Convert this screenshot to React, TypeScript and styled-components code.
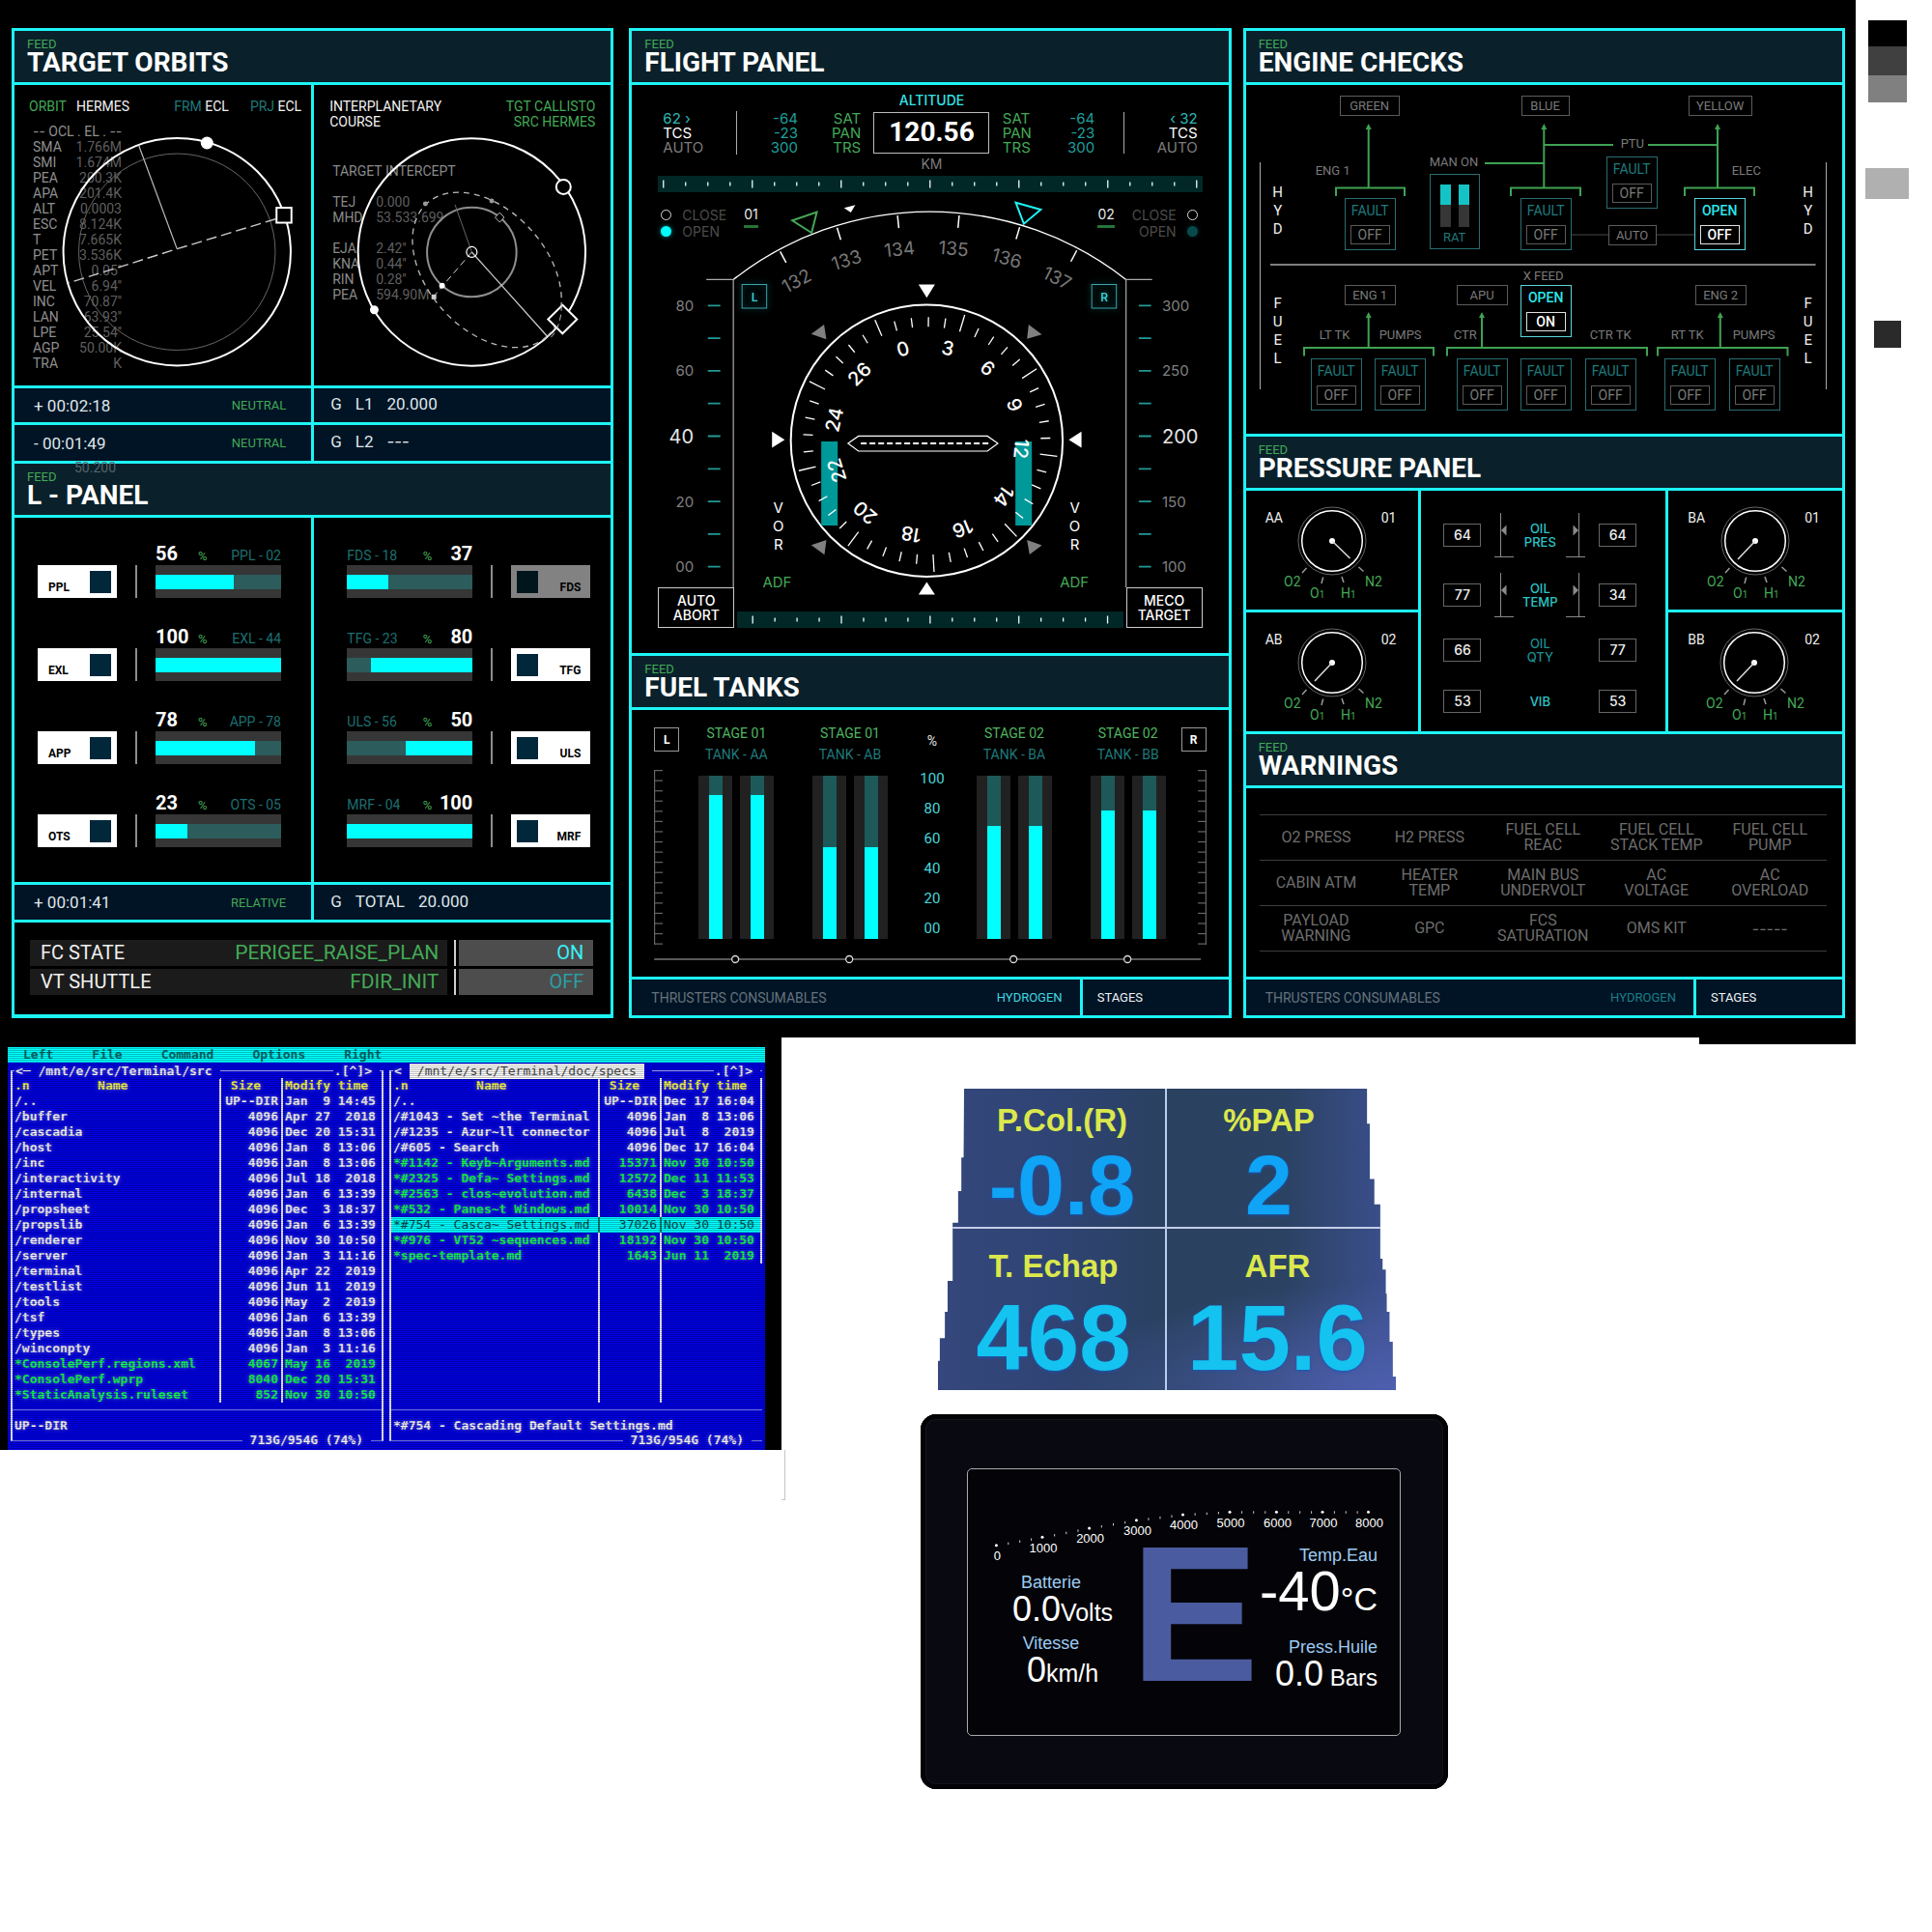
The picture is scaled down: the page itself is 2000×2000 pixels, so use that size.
import React from "react";
import styled, { createGlobalStyle, css } from "styled-components";

const C = {
  cyan: "#1df4f6",
  fill: "#00ffff",
  green: "#43a957",
  teal: "#1f7a7b",
  header: "#0a212b",
  navy: "#011425",
  grey: "#7c7c7c",
};
const NARROW = 'Roboto, "Liberation Sans", sans-serif';
const WIDE = 'Inter, "Liberation Sans", sans-serif';

const Global = createGlobalStyle`
  * { box-sizing: border-box; }
  body { margin: 0; background: #fff; font-family: ${NARROW}; }
  button { font: inherit; color: inherit; background: none; border: 0; padding: 0; margin: 0; cursor: pointer; }
  ul, dl, dd, dt, h2, p { margin: 0; padding: 0; list-style: none; }
`;

/* ---------- page frame ---------- */
const Page = styled.div`
  display: flex;
  align-items: flex-start;
`;
const Main = styled.main`
  flex: 1;
  min-width: 0;
`;
const Console = styled.section`
  background: #000;
  padding: 29px 11px 20px 12px;
  display: grid;
  grid-template-columns: minmax(0, 1fr) 16px minmax(0, 1fr) 12px minmax(0, 1fr);
  > :nth-child(2) {
    grid-column: 3;
  }
  > :nth-child(3) {
    grid-column: 5;
  }
`;
const Panel = styled.section`
  display: flex;
  flex-direction: column;
  gap: 3px;
  padding: 3px;
  background: ${C.cyan};
`;
const Head = styled.header`
  position: relative;
  background: ${C.header};
  padding: 7px 13px;
`;
const Feed = styled.p`
  font-size: 13px;
  line-height: 13px;
  color: ${C.green};
`;
const Title = styled.h2`
  font-size: 28px;
  line-height: 26px;
  font-weight: 700;
  color: #fff;
`;
const Ghost = styled.span`
  position: absolute;
  left: 62px;
  top: -4px;
  font-size: 14px;
  line-height: 16px;
  color: #56636a;
`;
const Split = styled.div<{ $cols?: string }>`
  display: grid;
  grid-template-columns: ${(p) => p.$cols ?? "1fr 1fr"};
  gap: 3px;
`;
const Pane = styled.div`
  position: relative;
  background: #000;
`;

function Heading({ title, ghost }: { title: string; ghost?: string }) {
  return (
    <Head>
      {ghost && <Ghost>{ghost}</Ghost>}
      <Feed>FEED</Feed>
      <Title>{title}</Title>
    </Head>
  );
}

/* ---------- target orbits ---------- */
const OrbitPane = styled(Pane)<{ $pad: string }>`
  padding: ${(p) => p.$pad};
  font-size: 14px;
  line-height: 16px;
  min-height: 311px;
`;
const OrbitTop = styled.div`
  display: flex;
  gap: 22px;
  color: #f2f2f2;
`;
const Push = styled.span`
  margin-right: auto;
  display: flex;
  gap: 10px;
`;
const Tint = styled.span<{ $c: string }>`
  color: ${(p) => p.$c};
`;
const Dashes = styled.span`
  font-family: ${WIDE};
`;
const Elements = styled.dl`
  margin: 10px 0 0 4px;
  width: 92px;
  color: #8f8f8f;
  div {
    display: flex;
    justify-content: space-between;
    white-space: nowrap;
  }
  dd {
    color: #5f5f5f;
  }
`;
const Intercept = styled.dl<{ $first?: boolean }>`
  margin: ${(p) => (p.$first ? 35 : 16)}px 0 0 3px;
  color: #8a8a8a;
  div {
    display: flex;
  }
  div dt {
    width: 45px;
  }
  dd {
    color: #5f5f5f;
  }
`;
const Right = styled.p`
  text-align: right;
  color: ${C.green};
`;
const Overlay = styled.svg`
  position: absolute;
  inset: 0;
  width: 100%;
  height: 100%;
  pointer-events: none;
`;

const ELEMENTS = [
  ["SMA", "1.766M"], ["SMI", "1.674M"], ["PEA", "200.3K"], ["APA", "201.4K"], ["ALT", "0.0003"],
  ["ESC", "8.124K"], ["T", "7.665K"], ["PET", "3.536K"], ["APT", "0.05''"], ["VEL", "6.94''"],
  ["INC", "70.87''"], ["LAN", "63.93''"], ["LPE", "25.54''"], ["AGP", "50.00K"], ["TRA", "K"],
];

function Orbits() {
  return (
    <Split>
      <OrbitPane $pad="14px 10px 15px 15px">
        <OrbitTop>
          <Push><Tint $c={C.green}>ORBIT</Tint><span>HERMES</span></Push>
          <span><Tint $c={C.teal}>FRM</Tint> ECL</span>
          <span><Tint $c={C.teal}>PRJ</Tint> ECL</span>
        </OrbitTop>
        <Elements>
          <div><dt><Dashes>--</Dashes> OCL . EL . <Dashes>--</Dashes></dt></div>
          {ELEMENTS.map(([k, v]) => (
            <div key={k}><dt>{k}</dt><dd>{v}</dd></div>
          ))}
        </Elements>
        <Overlay viewBox="15 88 308 311" fill="none" stroke="#fff">
          <circle cx="183.7" cy="260.8" r="118" strokeWidth="2" />
          <circle cx="183.7" cy="260.8" r="102" stroke="#666" strokeWidth="1" />
          <path d="M183.7 257.7L143.9 150" stroke="#bbb" strokeWidth="1.2" />
          <path d="M286 226.7L183.7 257.7L70.5 293.3" stroke="#ccc" strokeWidth="1.4" strokeDasharray="11 5" />
          <circle cx="214.8" cy="147.7" r="6.5" fill="#fff" stroke="none" />
          <rect x="287" y="215" width="15.5" height="15.5" fill="#000" strokeWidth="2" />
        </Overlay>
      </OrbitPane>
      <OrbitPane $pad="14px 16px 15px">
        <OrbitTop>
          <Push>INTERPLANETARY<br />COURSE</Push>
          <Right>TGT CALLISTO<br />SRC HERMES</Right>
        </OrbitTop>
        <Intercept $first><dt>TARGET INTERCEPT</dt></Intercept>
        <Intercept>
          <div><dt>TEJ</dt><dd>0.000</dd></div>
          <div><dt>MHD</dt><dd>53.533.699</dd></div>
        </Intercept>
        <Intercept>
          <div><dt>EJA</dt><dd>2.42''</dd></div>
          <div><dt>KNA</dt><dd>0.44''</dd></div>
          <div><dt>RIN</dt><dd>0.28''</dd></div>
          <div><dt>PEA</dt><dd>594.90M</dd></div>
        </Intercept>
        <Overlay viewBox="325 88 308 311" fill="none" stroke="#fff">
          <circle cx="488.8" cy="261" r="118" strokeWidth="2" />
          <circle cx="488.8" cy="261" r="46.4" stroke="#8f8f8f" strokeWidth="2" />
          <ellipse cx="504.6" cy="279.5" rx="93" ry="61.8" transform="rotate(48 504.6 279.5)" stroke="#bbb" strokeWidth="1.3" strokeDasharray="6 5" />
          <path d="M488.8 261L471.4 211.7" stroke="#666" />
          <path d="M488.8 261L449 307.3" stroke="#ccc" strokeDasharray="7 4" />
          <path d="M488.8 261L567 348.3" stroke="#ccc" strokeWidth="1.3" />
          <circle cx="488.8" cy="261" r="5.5" strokeWidth="1.2" />
          <circle cx="440.7" cy="211" r="2.5" fill="#999" stroke="none" />
          <circle cx="509.5" cy="208" r="2.5" fill="#999" stroke="none" />
          <path d="M517.8 220L522.5 225L517.8 230L513 225Z" fill="#000" stroke="#bbb" />
          <circle cx="458" cy="296" r="3" fill="#fff" stroke="none" />
          <rect x="447" y="305" width="5" height="5" fill="#ccc" stroke="none" />
          <path d="M583 316L598 330.7L583 345.5L568 330.7Z" fill="#000" strokeWidth="2" />
          <path d="M582 316C582 330 578 345 568 352" stroke="#bbb" strokeDasharray="6 4" />
          <circle cx="584" cy="193.3" r="7.5" fill="#000" strokeWidth="2" />
          <circle cx="387.6" cy="321" r="4.5" fill="#fff" stroke="none" />
        </Overlay>
      </OrbitPane>
    </Split>
  );
}

/* ---------- status strips ---------- */
const Strip = styled.div<{ $h: number }>`
  display: flex;
  align-items: center;
  justify-content: space-between;
  min-height: ${(p) => p.$h}px;
  padding: 0 26px 0 20px;
  background: ${C.navy};
  color: #dfe5ea;
  font-size: 17px;
`;
const StripInfo = styled(Strip)`
  justify-content: flex-start;
  gap: 14px;
  padding: 0 17px 3px;
`;
const Mode = styled.span<{ $c: string }>`
  font-size: 13px;
  color: ${(p) => p.$c};
`;
function StatusPair({ h, time, mode, info }: { h: number; time: string; mode: string; info: string[] }) {
  return (
    <Split>
      <Strip $h={h}><span>{time}</span><Mode $c={C.green}>{mode}</Mode></Strip>
      <StripInfo $h={h}>{info.map((t) => (t[0] === "-" ? <Dashes key={t}>{t}</Dashes> : <span key={t}>{t}</span>))}</StripInfo>
    </Split>
  );
}
const FootNote = styled(Strip)`
  font-size: 14px;
  color: #66727c;
  padding: 0 18px 0 20px;
`;
const FootTab = styled.button`
  background: ${C.navy};
  color: #eef2f5;
  font-size: 13px;
  text-align: left;
  padding: 0 15px;
`;
function PanelFoot({ bright }: { bright?: boolean }) {
  return (
    <Split $cols="1fr 151px">
      <FootNote $h={37}>
        <span>THRUSTERS CONSUMABLES</span>
        <Mode $c={bright ? "#3fd8e0" : "#1a7f85"}>HYDROGEN</Mode>
      </FootNote>
      <FootTab>STAGES</FootTab>
    </Split>
  );
}

/* ---------- L panel ---------- */
const Channels = styled.ul`
  background: #000;
  display: flex;
  flex-direction: column;
  gap: 28px;
  padding: 25px 21px 36px 24px;
`;
const Channel = styled.li<{ $flip?: boolean }>`
  display: flex;
  flex-direction: ${(p) => (p.$flip ? "row-reverse" : "row")};
  align-items: flex-end;
  gap: 19px;
`;
const Switch = styled.button<{ $flip?: boolean; $off?: boolean }>`
  display: flex;
  flex-direction: ${(p) => (p.$flip ? "row-reverse" : "row")};
  justify-content: space-between;
  align-items: center;
  width: 82px;
  height: 34px;
  padding: 0 6px 0 11px;
  ${(p) => p.$flip && "padding: 0 10px 0 6px;"}
  background: ${(p) => (p.$off ? "#828282" : "#fff")};
  color: #000;
  font-size: 12px;
  font-weight: 700;
`;
const SwitchText = styled.span`
  padding-top: 12px;
`;
const Knob = styled.span<{ $off?: boolean }>`
  width: 22px;
  height: 23px;
  background: ${(p) => (p.$off ? "#00151c" : "#00283a")};
`;
const Rule = styled.span`
  width: 2px;
  height: 34px;
  background: #8d8d8d;
`;
const Level = styled.div`
  width: 130px;
`;
const LevelHead = styled.div<{ $flip?: boolean }>`
  display: grid;
  grid-template-columns: ${(p) => (p.$flip ? "1fr auto 42px" : "44px auto 1fr")};
  align-items: baseline;
  height: 24px;
  line-height: 24px;
  font-size: 13px;
  color: #1c6f70;
`;
const Big = styled.b<{ $end?: boolean }>`
  font-size: 20px;
  color: #fff;
  text-align: ${(p) => (p.$end ? "right" : "left")};
`;
const Name = styled.span<{ $end?: boolean }>`
  font-size: 14px;
  text-align: ${(p) => (p.$end ? "right" : "left")};
`;
const Track = styled.div<{ $end?: boolean }>`
  height: 34px;
  padding: 10px 0 9px;
  background: #363636;
  > div {
    height: 15px;
    background: #2c5c5c;
    display: flex;
    justify-content: ${(p) => (p.$end ? "flex-end" : "flex-start")};
  }
  > div > i {
    background: ${C.fill};
  }
`;
type Ch = { id: string; value: number; name: string; level: number; off?: boolean; end?: boolean };
const LEFT: Ch[] = [
  { id: "PPL", value: 56, name: "PPL - 02", level: 62 },
  { id: "EXL", value: 100, name: "EXL - 44", level: 100 },
  { id: "APP", value: 78, name: "APP - 78", level: 79 },
  { id: "OTS", value: 23, name: "OTS - 05", level: 25 },
];
const RIGHT: Ch[] = [
  { id: "FDS", value: 37, name: "FDS - 18", level: 33, off: true },
  { id: "TFG", value: 80, name: "TFG - 23", level: 81, end: true },
  { id: "ULS", value: 50, name: "ULS - 56", level: 53, end: true },
  { id: "MRF", value: 100, name: "MRF - 04", level: 100, end: true },
];
function ChannelList({ items, flip }: { items: Ch[]; flip?: boolean }) {
  return (
    <Channels>
      {items.map((c) => (
        <Channel key={c.id} $flip={flip}>
          <Switch $flip={flip} $off={c.off} role="switch" aria-checked={!c.off}>
            <SwitchText>{c.id}</SwitchText>
            <Knob $off={c.off} />
          </Switch>
          <Rule />
          <Level>
            <LevelHead $flip={flip}>
              {flip ? <Name>{c.name}</Name> : <Big>{c.value}</Big>}
              <Tint $c={C.green}>%</Tint>
              {flip ? <Big $end>{c.value}</Big> : <Name $end>{c.name}</Name>}
            </LevelHead>
            <Track $end={c.end}>
              <div><i style={{ width: `${c.level}%` }} /></div>
            </Track>
          </Level>
        </Channel>
      ))}
    </Channels>
  );
}

const States = styled.div`
  background: #000;
  padding: 18px 18px 20px 16px;
  display: grid;
  gap: 3px;
`;
const StateRow = styled.div`
  display: grid;
  grid-template-columns: 1fr 2px 139px;
  column-gap: 3px;
  height: 27px;
  line-height: 27px;
  font-size: 20px;
`;
const StateName = styled.div`
  display: flex;
  justify-content: space-between;
  margin-right: 4px;
  padding: 0 9px 0 11px;
  background: #1b1b1b;
  color: #f0f0f0;
`;
const StatePlan = styled.span`
  font-size: 21px;
  color: ${C.green};
`;
const StateBar = styled.span`
  background: #cfcfcf;
`;
const StateButton = styled.button<{ $on?: boolean }>`
  background: #4d4d4d;
  text-align: right;
  padding-right: 10px;
  font-size: 20px;
  line-height: 27px;
  color: ${(p) => (p.$on ? "#3af0f5" : "#2b9ea2")};
`;

/* ---------- flight panel ---------- */
const Flight = styled.div`
  background: #000;
  padding: 8px 27px 26px;
  font-family: ${WIDE};
  font-size: 14px;
`;
const Readouts = styled.div`
  display: grid;
  grid-template-columns: 76fr 63fr 65fr 146fr 34fr 61fr 31fr 75fr;
  align-items: center;
  padding: 0 5px;
  font-size: 15px;
  line-height: 15px;
  margin-bottom: 4px;
`;
const Lines = styled.div<{ $end?: boolean; $rule?: boolean; $c?: string }>`
  text-align: ${(p) => (p.$end ? "right" : "left")};
  color: ${(p) => p.$c ?? "#fff"};
  white-space: pre-line;
  min-height: 43px;
  ${(p) => p.$rule && "border-right: 1px solid #aaa;"}
`;
const Altitude = styled.div`
  display: flex;
  flex-direction: column;
  align-items: center;
  font-size: 14px;
  line-height: 16px;
  color: ${C.grey};
`;
const AltLabel = styled.span`
  color: #35e3e8;
  font-weight: 500;
`;
const AltBox = styled.output`
  width: 120px;
  height: 43px;
  margin: 4px 0 3px;
  border: 1px solid #bbb;
  color: #fff;
  font: 700 28px/40px ${NARROW};
  text-align: center;
`;
const Ticks = styled.svg`
  display: block;
  width: 100%;
  height: 17px;
  background: #022727;
`;
function TickBar({ from, count, x, w }: { from: number; count: number; x: number; w: number }) {
  return (
    <Ticks viewBox={`${x} 0 ${w} 17`} stroke="#e6ffff" strokeWidth="1.3">
      {Array.from({ length: count }, (_, i) => {
        const cx = from + i * 23;
        return <path key={i} d={i % 4 === 0 ? `M${cx} 4.5V12.5` : `M${cx} 6.5V10.5`} />;
      })}
    </Ticks>
  );
}
const Stage = styled.div`
  position: relative;
  height: 409px;
`;
const Dial = styled.svg`
  display: block;
  width: 100%;
  height: 100%;
  overflow: visible;
`;
const Gate = styled.div<{ $right?: boolean }>`
  position: absolute;
  top: 15px;
  ${(p) => (p.$right ? "right: 5px;" : "left: 3px;")}
  display: flex;
  flex-direction: ${(p) => (p.$right ? "row-reverse" : "row")};
  gap: 18px;
  line-height: 17px;
  color: #4c4c4c;
`;
const GateNo = styled.span`
  align-self: flex-start;
  font-size: 14px;
  line-height: 16px;
  color: #e8e8e8;
  border-bottom: 3px solid #27733a;
  padding-bottom: 3px;
`;
const Option = styled.label<{ $right?: boolean }>`
  display: flex;
  flex-direction: ${(p) => (p.$right ? "row-reverse" : "row")};
  align-items: center;
  gap: 11px;
`;
const Radio = styled.input<{ $dim?: boolean }>`
  appearance: none;
  width: 11px;
  height: 11px;
  margin: 0;
  border: 1px solid #ddd;
  border-radius: 50%;
  &:checked {
    border: 0;
    background: ${(p) => (p.$dim ? "#064a4c" : "#00ffff")};
    box-shadow: 0 0 5px ${(p) => (p.$dim ? "#022e30" : "#008c8c")};
  }
`;
function GateGroup({ no, right }: { no: string; right?: boolean }) {
  return (
    <Gate $right={right}>
      <div>
        <Option $right={right}><Radio type="radio" name={`gate${no}`} $dim={right} />CLOSE</Option>
        <Option $right={right}><Radio type="radio" name={`gate${no}`} $dim={right} defaultChecked />OPEN</Option>
      </div>
      <GateNo>{no}</GateNo>
    </Gate>
  );
}
const FlightBase = styled.div`
  display: grid;
  grid-template-columns: 79px 1fr 79px;
  column-gap: 3px;
  align-items: end;
`;
const FlightButton = styled.button`
  height: 42px;
  border: 1px solid #ccc;
  color: #fff;
  font-size: 14px;
  font-weight: 500;
  line-height: 15px;
`;

const polar = (cx: number, cy: number, r: number, deg: number) => {
  const a = (deg * Math.PI) / 180;
  return [cx + r * Math.sin(a), cy - r * Math.cos(a)];
};
const COMPASS: [string, number][] = [
  ["0", -14.6], ["3", 12.8], ["6", 40], ["9", 67.8], ["12", 95], ["14", 125.7],
  ["16", 157.8], ["18", 189.5], ["20", 220.5], ["22", 251.7], ["24", 282.8], ["26", 314.8],
];
function DialText({ x, y, rot = 0, size = 14, fill = "#fff", anchor = "middle", weight = 400, children }: any) {
  return (
    <text x={x} y={y} fill={fill} stroke="none" fontSize={size} fontWeight={weight} textAnchor={anchor} dominantBaseline="central" transform={rot ? `rotate(${rot} ${x} ${y})` : undefined}>
      {children}
    </text>
  );
}
function FlightDial() {
  const cx = 958.2;
  const cy = 456.2;
  return (
    <Dial viewBox="681 199 561 409" fill="none" stroke="#fff" fontFamily={WIDE}>
      <path d="M758 289.4A329 329 0 0 1 1164.5 289.4" strokeWidth="1.3" />
      <path d="M730 289.4H758V608M1191.5 289.4H1164.5V608" stroke="#aaa" strokeWidth="1.2" />
      {[0, 1, 2, 3, 4, 5].map((i) => {
        const a = -28.2 + 11.2 * i;
        const [x1, y1] = polar(961, 548.5, 327, a);
        const [x2, y2] = polar(961, 548.5, 314, a);
        const la = -28.1 + 11 * i;
        const [lx, ly] = polar(961, 548.5, 292, la);
        return (
          <g key={i}>
            <path d={`M${x1} ${y1}L${x2} ${y2}`} strokeWidth="1.5" />
            <DialText x={lx} y={ly} rot={la} size={19} fill="#777">{132 + i}</DialText>
          </g>
        );
      })}
      <path d="M819.1 228.3L844.4 219.5L839 241Z" stroke={C.green} strokeWidth="2" />
      <path d="M872.6 215.3L884.2 212.3L879.6 220Z" fill="#fff" stroke="none" />
      <path d="M1050.4 209.8L1076.2 217L1058.7 231.7Z" stroke="#1df4f6" strokeWidth="2" />
      {([["L", 767], ["R", 1129]] as [string, number][]).map(([t, x]) => (
        <g key={t} style={{ filter: "drop-shadow(0 0 3px #007c80)" }}>
          <rect x={x} y="294.5" width="25.5" height="24.5" stroke="#3aa5a9" />
          <DialText x={x + 13} y={307} size={12} weight={600} fill="#3cd0d2">{t}</DialText>
        </g>
      ))}
      <g fill="#fff" stroke="none">
        <path d="M949.7 294.4H966.7L958.2 308.3Z" />
        <path d="M949.7 615.5H966.7L958.2 602.5Z" />
        <path d="M798 446.8V463.6L811.2 455.2Z" />
        <path d="M1118.4 446.8V463.6L1105.2 455.2Z" />
      </g>
      <g fill="#808080" stroke="none">
        <path d="M838.6 345.8L851.9 336L854.3 351.2Z" />
        <path d="M1077.4 346.2L1063.7 336L1062 350.8Z" />
        <path d="M838.6 564.2L854.3 559.1L852.3 574.3Z" />
        <path d="M1077.4 564.6L1062 559.1L1064.6 573.9Z" />
      </g>
      <circle cx={cx} cy={cy} r="140.7" strokeWidth="2" />
      <rect x="849" y="457" width="17" height="87" fill="#009999" stroke="none" />
      <rect x="1050" y="457" width="17" height="87" fill="#009999" stroke="none" />
      {Array.from({ length: 45 }, (_, i) => {
        const a = 16.8 + 8 * i;
        const [x1, y1] = polar(cx, cy, i % 5 === 0 ? 136 : 128, a);
        const [x2, y2] = polar(cx, cy, 118, a);
        return <path key={i} d={`M${x1} ${y1}L${x2} ${y2}`} strokeWidth="1.3" />;
      })}
      {COMPASS.map(([t, a]) => {
        const [x, y] = polar(cx, cy, 98, a);
        return <DialText key={t} x={x} y={y} rot={a} size={20} weight={500}>{t}</DialText>;
      })}
      <path d="M876.7 459L887.5 451.4H1021L1031.8 459L1021 467H887.5Z" strokeWidth="1.2" />
      <path d="M890 459H1022" strokeWidth="1.8" strokeDasharray="6 3" />
      {["V", "O", "R"].map((t, i) => (
        <g key={t}>
          <DialText x={804.6} y={525 + 19 * i} size={15}>{t}</DialText>
          <DialText x={1111.4} y={525 + 19 * i} size={15}>{t}</DialText>
        </g>
      ))}
      <DialText x={803.3} y={602} size={15} fill={C.green}>ADF</DialText>
      <DialText x={1111} y={602} size={15} fill={C.green}>ADF</DialText>
      {Array.from({ length: 9 }, (_, i) => {
        const y = 316.3 + 33.8 * i;
        const mid = i === 4;
        const p = { y, size: mid ? 20 : 15, fill: mid ? "#e6e6e6" : "#808080" };
        return (
          <g key={i}>
            <path d={`M731.6 ${y}H744.5M1177.7 ${y}H1190.5`} stroke="#229a96" strokeWidth="1.8" />
            {i % 2 === 0 && (
              <>
                <DialText x={717} anchor="end" {...p}>{["80", "60", "40", "20", "00"][i / 2]}</DialText>
                <DialText x={1201.8} anchor="start" {...p}>{300 - 25 * i}</DialText>
              </>
            )}
          </g>
        );
      })}
    </Dial>
  );
}

/* ---------- fuel tanks ---------- */
const Tanks = styled.div`
  background: #000;
  padding: 15px 23px 13px;
`;
const TankGrid = styled.div`
  display: grid;
  grid-template-columns: 46px 78px 1fr 78px 92px 78px 1fr 78px 42px;
`;
const Column = styled.div<{ $align?: string }>`
  display: flex;
  flex-direction: column;
  align-items: ${(p) => p.$align ?? "center"};
  font-size: 14px;
  line-height: 18px;
  white-space: nowrap;
`;
const SideKey = styled.button`
  width: 26px;
  height: 25px;
  margin: 3px 0 19px;
  border: 1px solid #999;
  color: #fff;
  font-size: 12px;
  font-weight: 700;
`;
const TankName = styled.span`
  color: ${C.teal};
  margin: 4px 0 13px;
`;
const TankPair = styled.div`
  display: flex;
  gap: 8px;
`;
const Tank = styled.div`
  width: 35px;
  height: 169px;
  padding: 0 10px 0 11px;
  background: #212121;
  > div {
    height: 100%;
    background: #1d5959;
    display: flex;
    align-items: flex-end;
  }
  i {
    width: 100%;
    background: ${C.fill};
  }
`;
const Percent = styled.span`
  color: #e8e8e8;
  margin: 8px 0 15px;
`;
const ScaleNo = styled.span`
  color: #45d6da;
  font-size: 15px;
  line-height: 31px;
`;
const Ruler = styled.svg<{ $flip?: boolean }>`
  display: block;
  width: 10px;
  height: 181px;
  ${(p) => p.$flip && "transform: scaleX(-1);"}
`;
const Slide = styled.svg`
  display: block;
  width: 100%;
  height: 10px;
  margin-top: 10px;
`;
function SideRuler({ name, flip }: { name: string; flip?: boolean }) {
  return (
    <Column $align={flip ? "flex-end" : "flex-start"}>
      <SideKey>{name}</SideKey>
      <Ruler $flip={flip} viewBox="0 0 10 181" stroke="#666" strokeWidth="1.2">
        <path d="M.6 0V181" />
        {Array.from({ length: 18 }, (_, i) => <path key={i} d={`M0 ${0.6 + i * 10.56}H9`} />)}
      </Ruler>
    </Column>
  );
}
function TankColumn({ stage, name, level }: { stage: string; name: string; level: number }) {
  return (
    <Column>
      <Tint $c="#4fb561">{stage}</Tint>
      <TankName>{name}</TankName>
      <TankPair>
        {[0, 1].map((i) => (
          <Tank key={i}><div><i style={{ height: `${level}%` }} /></div></Tank>
        ))}
      </TankPair>
    </Column>
  );
}
function FuelTanks() {
  return (
    <Tanks>
      <TankGrid>
        <SideRuler name="L" />
        <TankColumn stage="STAGE 01" name="TANK - AA" level={88} />
        <span />
        <TankColumn stage="STAGE 01" name="TANK - AB" level={56} />
        <Column>
          <Percent>%</Percent>
          {["100", "80", "60", "40", "20", "00"].map((t) => <ScaleNo key={t}>{t}</ScaleNo>)}
        </Column>
        <TankColumn stage="STAGE 02" name="TANK - BA" level={69} />
        <span />
        <TankColumn stage="STAGE 02" name="TANK - BB" level={79} />
        <SideRuler name="R" flip />
      </TankGrid>
      <Slide viewBox="677 987 571 10" fill="#000">
        <path d="M677 992H1243" stroke="#777" strokeWidth="1.3" />
        {[761, 879, 1049, 1167].map((x) => <circle key={x} cx={x} cy="992" r="3.5" stroke="#ddd" strokeWidth="1.3" />)}
      </Slide>
    </Tanks>
  );
}

/* ---------- engine checks ---------- */
const EngineArea = styled.div`
  background: #000;
`;
const Canvas = styled.div`
  position: relative;
  width: 618px;
  height: 361px;
  margin: 0 auto;
  font-size: 13px;
  color: #7a7a7a;
`;
const at = css<{ $x: number; $y: number }>`
  position: absolute;
  left: ${(p) => p.$x}px;
  top: ${(p) => p.$y}px;
`;
const Tag = styled.span<{ $x: number; $y: number; $w: number }>`
  ${at}
  width: ${(p) => p.$w}px;
  height: 21px;
  line-height: 19px;
  text-align: center;
  border: 1px solid #5c5c5c;
`;
const Note = styled.span<{ $x: number; $y: number }>`
  ${at}
  line-height: 16px;
  white-space: nowrap;
`;
const Lamp = styled.button<{ $x: number; $y: number; $on?: boolean }>`
  ${at}
  width: 53px;
  height: 54px;
  display: flex;
  flex-direction: column;
  align-items: center;
  justify-content: space-between;
  padding: 4px 0 5px;
  border: 1px solid ${(p) => (p.$on ? "#58d5d9" : "#2a6d70")};
  color: ${(p) => (p.$on ? "#2be8ec" : C.teal)};
  font-size: 14px;
  line-height: 17px;
  font-weight: ${(p) => (p.$on ? 500 : 400)};
`;
const LampState = styled.span<{ $on?: boolean }>`
  width: 41px;
  height: 20px;
  line-height: 18px;
  font-size: 14px;
  border: 1px solid ${(p) => (p.$on ? "#e0e0e0" : "#5a5a5a")};
  color: ${(p) => (p.$on ? "#fff" : "#7a7a7a")};
`;
const Rat = styled.button`
  position: absolute;
  left: 190px;
  top: 92px;
  width: 52px;
  height: 78px;
  display: grid;
  grid-template-columns: 11px 11px;
  justify-content: center;
  align-content: start;
  column-gap: 8px;
  padding-top: 10px;
  border: 1px solid #2a6d70;
  color: ${C.teal};
  font-size: 13px;
  line-height: 22px;
`;
const RatBar = styled.span`
  height: 44px;
  background: linear-gradient(#14c3c5 0 21px, #363636 21px);
`;
const RatText = styled.span`
  grid-column: 1 / -1;
  margin: 0 -9px;
`;
const Stack = styled.span<{ $x: number; $y: number }>`
  ${at}
  display: flex;
  flex-direction: column;
  width: 16px;
  align-items: center;
  font-size: 15px;
  line-height: 19px;
  color: #eee;
`;
function VerticalWord({ word, x, y }: { word: string; x: number; y: number }) {
  return <Stack $x={x} $y={y}>{word.split("").map((l, i) => <span key={i}>{l}</span>)}</Stack>;
}
const TAGS: [string, number, number, number][] = [
  ["GREEN", 97, 11, 62], ["BLUE", 285, 11, 50], ["YELLOW", 458, 11, 66], ["AUTO", 375, 145, 50],
  ["ENG 1", 102, 207, 53], ["APU", 218, 207, 53], ["ENG 2", 465, 207, 53],
];
const NOTES: [string, number, number][] = [
  ["ENG 1", 72, 81], ["MAN ON", 190, 72], ["PTU", 388, 53], ["ELEC", 503, 81], ["X FEED", 287, 190],
  ["LT TK", 76, 251], ["PUMPS", 138, 251], ["CTR", 215, 251], ["CTR TK", 356, 251], ["RT TK", 440, 251], ["PUMPS", 504, 251],
];
const LAMPS: [number, number, string, string][] = [
  [102, 117, "FAULT", "OFF"], [284, 117, "FAULT", "OFF"], [373, 74, "FAULT", "OFF"], [464, 117, "OPEN", "OFF"], [284, 207, "OPEN", "ON"],
  [67, 283, "FAULT", "OFF"], [133, 283, "FAULT", "OFF"], [218, 283, "FAULT", "OFF"], [284, 283, "FAULT", "OFF"],
  [351, 283, "FAULT", "OFF"], [433, 283, "FAULT", "OFF"], [500, 283, "FAULT", "OFF"],
];
/* arrow x, arrow tip y, bracket y, bracket left, bracket right */
const WIRES = [
  [1415.7, 128, 194.5, 1382, 1453], [1597.3, 128, 194.5, 1563, 1635], [1777, 128, 194.5, 1743, 1815],
  [1415.7, 323, 360, 1349, 1483], [1533, 323, 360, 1497, 1704], [1779.8, 323, 360, 1715, 1849.5],
];
function Engine() {
  return (
    <EngineArea>
      <Canvas>
        <Overlay viewBox="1289 88 618 361" fill="none">
          <g stroke="#3fa252" strokeWidth="2">
            {WIRES.map(([x, tip, y, l, r]) => (
              <g key={`${x}-${tip}`}>
                <path d={`M${x} ${tip + 3}V${y}M${l} ${y + 8.5}V${y}H${r}V${y + 8.5}`} />
                <path d={`M${x} ${tip}L${x + 3} ${tip + 6}H${x - 3}Z`} fill="#3fa252" stroke="none" />
              </g>
            ))}
            <path d="M1536 169H1597M1597 150H1669M1705 150H1777" />
          </g>
          <path d="M1626 243H1664M1714 243H1753" stroke="#303030" strokeWidth="1.5" />
          <path d="M1314 274H1878.5" stroke="#aaa" strokeWidth="1.5" />
          <path d="M1303.5 168V403M1889.5 168V403" stroke="#aaa" />
        </Overlay>
        {TAGS.map(([t, x, y, w]) => <Tag key={t} $x={x} $y={y} $w={w}>{t}</Tag>)}
        {NOTES.map(([t, x, y]) => <Note key={`${t}${x}`} $x={x} $y={y}>{t}</Note>)}
        {LAMPS.map(([x, y, top, state]) => (
          <Lamp key={`${x}-${y}`} $x={x} $y={y} $on={top === "OPEN"}>
            {top}
            <LampState $on={top === "OPEN"}>{state}</LampState>
          </Lamp>
        ))}
        <Rat><RatBar /><RatBar /><RatText>RAT</RatText></Rat>
        <VerticalWord word="HYD" x={25} y={102} />
        <VerticalWord word="HYD" x={574} y={102} />
        <VerticalWord word="FUEL" x={25} y={217} />
        <VerticalWord word="FUEL" x={574} y={217} />
      </Canvas>
    </EngineArea>
  );
}

/* ---------- pressure panel ---------- */
const KnobPane = styled.div`
  background: #000;
  display: flex;
  justify-content: space-between;
  padding: 12px 23px 0 20px;
  font-size: 14px;
  line-height: 20px;
  color: #eee;
  height: 123px;
`;
const KnobLabel = styled.span`
  margin-top: 6px;
`;
const KnobSvg = styled.svg`
  width: 90px;
  height: 110px;
  overflow: visible;
`;
const KnobStack = styled.div`
  display: grid;
  gap: 3px;
`;
function PressureKnob({ name, no, right }: { name: string; no: string; right?: boolean }) {
  return (
    <KnobPane>
      <KnobLabel>{name}</KnobLabel>
      <KnobSvg viewBox="-45 -40 90 110" fill="none" stroke="#fff" role="img" aria-label={`${name} ${no}`}>
        <circle r="35" stroke="#666" />
        <circle r="31.3" strokeWidth="1.5" />
        <circle r="3" fill="#fff" stroke="none" />
        <path d={right ? "M0 0L18.5 18" : "M0 0L-18 19"} strokeWidth="1.5" stroke="#ddd" />
        <path d="M-26.5 28L-31 33M-9.3 37.5L-11 44M10 37L12 43M27.5 27L32.5 31.5" stroke="#999" strokeWidth="1.5" />
        <g fill={C.green} stroke="none" fontSize="14" fontFamily={NARROW}>
          <text x="-50" y="47">O2</text>
          <text x="-23" y="59">O<tspan fontSize="10">1</tspan></text>
          <text x="9" y="59">H<tspan fontSize="10">1</tspan></text>
          <text x="34" y="47">N2</text>
        </g>
      </KnobSvg>
      <KnobLabel>{no}</KnobLabel>
    </KnobPane>
  );
}
const OilPane = styled.div`
  background: #000;
  display: grid;
  grid-template-columns: 39px 20px 1fr 20px 39px;
  grid-template-rows: 62px 62px 52px 54px;
  column-gap: 14px;
  align-items: center;
  padding: 15px 30px 0 23px;
  font: 500 13px/14px ${WIDE};
  text-align: center;
`;
const OilBox = styled.output`
  height: 24px;
  line-height: 22px;
  border: 1px solid #666;
  color: #eee;
  font-size: 14px;
`;
const OilName = styled.span<{ $dim?: boolean }>`
  margin: 0 -10px;
  color: ${(p) => (p.$dim ? "#1b8f91" : "#2cc5c6")};
`;
const Bracket = styled.svg<{ $flip?: boolean }>`
  width: 20px;
  height: 46px;
  ${(p) => p.$flip && "transform: scaleX(-1);"}
`;
const OILS: [string, string[], string, boolean, boolean][] = [
  ["64", ["OIL", "PRES"], "64", true, false],
  ["77", ["OIL", "TEMP"], "34", true, false],
  ["66", ["OIL", "QTY"], "77", false, true],
  ["53", ["VIB"], "53", false, false],
];
function OilBracket({ flip }: { flip?: boolean }) {
  return (
    <Bracket $flip={flip} viewBox="0 0 20 46" fill="none" stroke="#8a8a8a">
      <path d="M6.5 0V45.5M0 45.5H20" />
      <path d="M7 18L12.5 12.5V23.5Z" fill="#8a8a8a" stroke="none" />
    </Bracket>
  );
}
function Pressure() {
  return (
    <Split $cols="179fr 253fr 180fr">
      <KnobStack><PressureKnob name="AA" no="01" right /><PressureKnob name="AB" no="02" /></KnobStack>
      <OilPane>
        {OILS.map(([l, name, r, bracket, dim]) => (
          <React.Fragment key={name.join()}>
            <OilBox>{l}</OilBox>
            {bracket ? <OilBracket /> : <span />}
            <OilName $dim={dim}>{name[0]}{name[1] && <><br />{name[1]}</>}</OilName>
            {bracket ? <OilBracket flip /> : <span />}
            <OilBox>{r}</OilBox>
          </React.Fragment>
        ))}
      </OilPane>
      <KnobStack><PressureKnob name="BA" no="01" /><PressureKnob name="BB" no="02" /></KnobStack>
    </Split>
  );
}

/* ---------- warnings ---------- */
const WarnArea = styled.div`
  background: #000;
  padding: 27px 16px 25px 14px;
  flex: 1;
`;
const WarnTable = styled.table`
  width: 100%;
  table-layout: fixed;
  border-collapse: collapse;
  font-size: 16px;
  line-height: 16px;
  color: #6d6d6d;
  text-align: center;
  tr {
    height: 47px;
    border-top: 1px solid #3e3e3e;
    border-bottom: 1px solid #3e3e3e;
  }
  td {
    padding: 0;
    white-space: pre-line;
  }
`;
const WARNINGS = [
  ["O2 PRESS", "H2 PRESS", "FUEL CELL\nREAC", "FUEL CELL\nSTACK TEMP", "FUEL CELL\nPUMP"],
  ["CABIN ATM", "HEATER\nTEMP", "MAIN BUS\nUNDERVOLT", "AC\nVOLTAGE", "AC\nOVERLOAD"],
  ["PAYLOAD\nWARNING", "GPC", "FCS\nSATURATION", "OMS KIT", "-----"],
];

/* ---------- lower area ---------- */
const Lower = styled.div`
  display: flex;
  align-items: flex-start;
`;
const TermWrap = styled.section`
  flex: 0 0 809px;
  padding: 10px 17px 0 8px;
  background: #000;
`;
const Terminal = styled.div`
  position: relative;
  background: #0000e4;
  font: 700 13px/16px "DejaVu Sans Mono", "Liberation Mono", monospace;
  color: #fafaff;
  text-shadow: 0 0 4px rgba(190, 190, 255, 0.6);
  &::after {
    content: "";
    position: absolute;
    inset: 0;
    pointer-events: none;
    background: repeating-linear-gradient(transparent 0 1px, rgba(0, 0, 0, 0.25) 1px 2px);
  }
`;
const Menu = styled.nav`
  display: flex;
  gap: 40px;
  height: 16px;
  padding-left: 16px;
  background: #00ffff;
  color: #00686a;
  text-shadow: none;
`;
const Panes = styled.div`
  display: grid;
  grid-template-columns: 1fr 1fr;
  padding: 8px 0 9px;
`;
const Frame = styled.div<{ $open?: boolean }>`
  position: relative;
  margin: 0 3px;
  padding-top: 7px;
  border: 2px solid #f0f0ff;
  border-top: 1px solid #9a9aff;
  border-bottom: 1px solid #9a9aff;
  ${(p) => p.$open && "border-right: 0;"}
`;
const FrameTitle = styled.div`
  position: absolute;
  top: -8px;
  left: 2px;
  right: 2px;
  display: flex;
  justify-content: space-between;
  height: 16px;
`;
const Plate = styled.span`
  background: #0000e4;
  padding: 0 8px 0 1px;
`;
const Active = styled.span`
  background: #fff;
  color: #4c4c4c;
  padding: 0 8px;
  margin-left: 8px;
  font-weight: 400;
  text-shadow: none;
  display: inline-block;
`;
const Files = styled.table<{ $open?: boolean }>`
  width: 100%;
  border-collapse: separate;
  border-spacing: 0;
  table-layout: fixed;
  ${(p) => p.$open && "border-right: 2px solid #f0f0ff;"}
  th, td {
    padding: 0 3px 0 2px;
    height: 16px;
    white-space: pre;
    text-align: left;
    overflow: hidden;
  }
  th + th, td + td {
    border-left: 2px solid #f0f0ff;
  }
  td:nth-child(2) {
    text-align: right;
  }
  th {
    color: #f8f840;
  }
`;
const FileRow = styled.tr<{ $kind: string }>`
  ${(p) => p.$kind === "file" && "color: #0cff4c;"}
  ${(p) => p.$kind === "sel" && "color: #004c4c; background: #00ffff; font-weight: 400; text-shadow: none;"}
  ${(p) => p.$kind === "sel" && "&& td { border-color: #007c7c; }"}
`;
const Filler = styled.div`
  display: grid;
  grid-template-columns: 1fr 64px 104px;
  height: 144px;
  margin-right: 2px;
  span + span {
    border-left: 2px solid #f0f0ff;
  }
`;
const Summary = styled.div`
  margin-top: 7px;
  padding: 8px 2px 7px;
  border-top: 1px solid #9a9aff;
`;
const Disk = styled.span`
  position: absolute;
  right: 11px;
  bottom: -8px;
  padding: 0 8px;
  background: #0000e4;
`;
type Row = [string, string, string];
const SRC: Row[] = [
  ["/..", "UP--DIR", "Jan  9 14:45"], ["/buffer", "4096", "Apr 27  2018"], ["/cascadia", "4096", "Dec 20 15:31"],
  ["/host", "4096", "Jan  8 13:06"], ["/inc", "4096", "Jan  8 13:06"], ["/interactivity", "4096", "Jul 18  2018"],
  ["/internal", "4096", "Jan  6 13:39"], ["/propsheet", "4096", "Dec  3 18:37"], ["/propslib", "4096", "Jan  6 13:39"],
  ["/renderer", "4096", "Nov 30 10:50"], ["/server", "4096", "Jan  3 11:16"], ["/terminal", "4096", "Apr 22  2019"],
  ["/testlist", "4096", "Jun 11  2019"], ["/tools", "4096", "May  2  2019"], ["/tsf", "4096", "Jan  6 13:39"],
  ["/types", "4096", "Jan  8 13:06"], ["/winconpty", "4096", "Jan  3 11:16"], ["*ConsolePerf.regions.xml", "4067", "May 16  2019"],
  ["*ConsolePerf.wprp", "8040", "Dec 20 15:31"], ["*StaticAnalysis.ruleset", "852", "Nov 30 10:50"],
];
const SPECS: Row[] = [
  ["/..", "UP--DIR", "Dec 17 16:04"], ["/#1043 - Set ~the Terminal", "4096", "Jan  8 13:06"],
  ["/#1235 - Azur~ll connector", "4096", "Jul  8  2019"], ["/#605 - Search", "4096", "Dec 17 16:04"],
  ["*#1142 - Keyb~Arguments.md", "15371", "Nov 30 10:50"], ["*#2325 - Defa~ Settings.md", "12572", "Dec 11 11:53"],
  ["*#2563 - clos~evolution.md", "6438", "Dec  3 18:37"], ["*#532 - Panes~t Windows.md", "10014", "Nov 30 10:50"],
  ["*#754 - Casca~ Settings.md", "37026", "Nov 30 10:50"], ["*#976 - VT52 ~sequences.md", "18192", "Nov 30 10:50"],
  ["*spec-template.md", "1643", "Jun 11  2019"],
];
function FilePane({ path, rows, summary, selected, open }: { path: string; rows: Row[]; summary: string; selected?: number; open?: boolean }) {
  return (
    <Frame $open={open}>
      <FrameTitle>
        {open ? <Plate>{"<"}<Active>{path}</Active></Plate> : <Plate>{`<─ ${path}`}</Plate>}
        <Plate>.[^]&gt;</Plate>
      </FrameTitle>
      <Files $open={open}>
        <colgroup><col /><col width="64" /><col width="104" /></colgroup>
        <thead>
          <tr><th>{".n         Name"}</th><th>{" Size"}</th><th>Modify time</th></tr>
        </thead>
        <tbody>
          {rows.map(([n, s, d], i) => (
            <FileRow key={n} $kind={i === selected ? "sel" : n[0] === "*" ? "file" : "dir"}>
              <td>{n}</td><td>{s}</td><td>{d}</td>
            </FileRow>
          ))}
        </tbody>
      </Files>
      {open && <Filler><span /><span /><span /></Filler>}
      <Summary>{summary}</Summary>
      <Disk>713G/954G (74%)</Disk>
    </Frame>
  );
}
const Tail = styled.div`
  width: 4px;
  height: 52px;
  margin-top: 427px;
  border: solid #c4c4c4;
  border-width: 0 1px 1px 0;
`;
const Gauges = styled.section`
  flex: 1;
  display: flex;
  flex-direction: column;
  align-items: flex-start;
  padding-left: 140px;
  font-family: "Liberation Sans", Arial, sans-serif;
`;
const Notch = styled.div`
  align-self: flex-end;
  width: 162px;
  height: 7px;
  background: #000;
`;
const Quad = styled.div`
  width: 474px;
  margin: 46px 0 0 18px;
  display: grid;
  grid-template-columns: 1fr 1fr;
  grid-template-rows: 145px 167px;
  background: radial-gradient(120% 60% at 100% 100%, #4d5fae 0%, rgba(60, 78, 140, 0) 60%),
    linear-gradient(90deg, #35477c 0%, #2f4474 25%, #2a4160 50%, #2b4262 75%, #3c5090 100%);
  clip-path: polygon(
    5.7% 0, 93.7% 0, 93.7% 11.6%, 94.3% 11.6%, 94.3% 30%, 95.3% 30%, 95.3% 38.4%, 96.6% 38.4%, 96.6% 56.4%, 97.1% 56.4%,
    97.1% 60%, 97.8% 60%, 97.8% 68%, 98% 68%, 98% 74%, 98.6% 74%, 98.6% 84%, 99.3% 84%, 99.3% 95.6%, 100% 95.6%, 100% 100%, 0 100%,
    0 90.3%, 0.4% 90.3%, 0.4% 82.8%, 1.5% 82.8%, 1.5% 74%, 2.1% 74%, 2.1% 63.8%, 3.2% 63.8%, 3.2% 44.5%, 4.4% 44.5%,
    4.4% 34%, 5.1% 34%, 5.1% 22.8%, 5.6% 22.8%
  );
`;
const QuadCell = styled.div<{ $pad: string }>`
  display: flex;
  flex-direction: column;
  align-items: center;
  padding: ${(p) => p.$pad};
  font-weight: 700;
  &:nth-child(odd) {
    border-right: 2px solid #b9cdf2;
  }
  &:nth-child(-n + 2) {
    border-bottom: 2px solid #c3cde6;
  }
`;
const QuadName = styled.span`
  color: #dbe84c;
  font-size: 33px;
  line-height: 36px;
`;
const QuadValue = styled.span<{ $low?: boolean }>`
  color: ${(p) => (p.$low ? "#14c3f0" : "#0fa4f6")};
  font-size: ${(p) => (p.$low ? 96 : 88)}px;
  line-height: ${(p) => (p.$low ? 112 : 98)}px;
  text-shadow: 0 1px 3px #1858b8;
`;
const Device = styled.div`
  width: 546px;
  margin-top: 25px;
  padding: 56px 49px 55px 48px;
  border-radius: 16px;
  background: #090912;
  box-shadow: inset 0 0 0 5px #030306, inset 0 0 0 6px #14141c;
`;
const Screen = styled.div`
  height: 277px;
  border: 1px solid #a9a9ae;
  border-radius: 5px;
  background: #040408;
`;
const Rpm = styled.svg`
  display: block;
  width: 100%;
  height: 79px;
  overflow: visible;
`;
const Readings = styled.div`
  display: grid;
  grid-template-columns: 184px 102px 1fr;
  color: #fff;
  line-height: 20px;
`;
const Gear = styled.div`
  color: #4b5b9f;
  font-size: 200px;
  line-height: 142px;
  font-weight: 700;
  margin-left: -16px;
`;
const Caption = styled.span`
  font-size: 18px;
  color: #9ccbf2;
`;
const Value = styled.span<{ $size: number; $unit: number; $gap: number }>`
  font-size: ${(p) => p.$size}px;
  line-height: ${(p) => (p.$size > 40 ? 54 : 36)}px;
  margin-bottom: ${(p) => p.$gap}px;
  white-space: nowrap;
  small {
    font-size: ${(p) => p.$unit}px;
  }
`;
const Reading = styled.div`
  display: flex;
  flex-direction: column;
`;
const LeftSide = styled(Reading)`
  align-items: center;
  padding-top: 28px;
  ${Caption} {
    padding-right: 12px;
  }
  ${Value} {
    padding-left: 12px;
  }
`;
const RightSide = styled(Reading)`
  align-items: flex-end;
  padding-right: 23px;
`;
const RPM = [
  [1031.4, 1598.7], [1079, 1590.3], [1127.6, 1581], [1176.4, 1572.7], [1224.5, 1567],
  [1273, 1564.3], [1321.4, 1564.3], [1369, 1564.3], [1416.5, 1564.3],
];
function RpmScale() {
  return (
    <Rpm viewBox="1002 1520 447 79" fill="#fff" fontSize="13" textAnchor="middle">
      {RPM.map(([x, y], i) => {
        const next = RPM[i + 1];
        return (
          <g key={i}>
            <circle cx={x} cy={y} r="1.5" />
            {next && [0.25, 0.5, 0.75].map((t) => (
              <rect key={t} x={x + (next[0] - x) * t} y={y + (next[1] - y) * t - 1} width="1" height="2.5" fill="#ccc" />
            ))}
            <text x={x + 1} y={y + 15.3}>{i * 1000}</text>
          </g>
        );
      })}
    </Rpm>
  );
}

/* ---------- swatches ---------- */
const Swatches = styled.aside`
  width: 79px;
  padding: 21px 14px 0 0;
  display: flex;
  flex-direction: column;
  align-items: center;
`;
const Swatch = styled.span<{ $w: number; $h: number; $c: string; $gap?: number }>`
  width: ${(p) => p.$w}px;
  height: ${(p) => p.$h}px;
  margin-top: ${(p) => p.$gap ?? 0}px;
  background: ${(p) => p.$c};
`;

export default function App() {
  return (
    <Page>
      <Global />
      <Main>
        <Console>
          <Panel>
            <Heading title="TARGET ORBITS" />
            <Orbits />
            <StatusPair h={35} time="+ 00:02:18" mode="NEUTRAL" info={["G", "L1", "20.000"]} />
            <StatusPair h={37} time="- 00:01:49" mode="NEUTRAL" info={["G", "L2", "---"]} />
            <Heading title="L - PANEL" ghost="50.200" />
            <Split>
              <ChannelList items={LEFT} />
              <ChannelList items={RIGHT} flip />
            </Split>
            <StatusPair h={36} time="+ 00:01:41" mode="RELATIVE" info={["G", "TOTAL", "20.000"]} />
            <States>
              <StateRow>
                <StateName><span>FC STATE</span><StatePlan>PERIGEE_RAISE_PLAN</StatePlan></StateName>
                <StateBar />
                <StateButton $on>ON</StateButton>
              </StateRow>
              <StateRow>
                <StateName><span>VT SHUTTLE</span><StatePlan>FDIR_INIT</StatePlan></StateName>
                <StateBar />
                <StateButton>OFF</StateButton>
              </StateRow>
            </States>
          </Panel>

          <Panel>
            <Heading title="FLIGHT PANEL" />
            <Flight>
              <Readouts>
                <Lines $rule><Tint $c="#2cb9b6">62 ›</Tint><br />TCS<br /><Tint $c={C.grey}>AUTO</Tint></Lines>
                <Lines $end $c="#1f9f9a">{"-64\n-23\n300"}</Lines>
                <Lines $end $c={C.green}>{"SAT\nPAN\nTRS"}</Lines>
                <Altitude><AltLabel>ALTITUDE</AltLabel><AltBox>120.56</AltBox>KM</Altitude>
                <Lines $c={C.green}>{"SAT\nPAN\nTRS"}</Lines>
                <Lines $end $c="#1f9f9a">{"-64\n-23\n300"}</Lines>
                <Lines $rule />
                <Lines $end><Tint $c="#2cb9b6">‹ 32</Tint><br />TCS<br /><Tint $c={C.grey}>AUTO</Tint></Lines>
              </Readouts>
              <TickBar from={685.6} count={25} x={681} w={561} />
              <Stage>
                <FlightDial />
                <GateGroup no="01" />
                <GateGroup no="02" right />
              </Stage>
              <FlightBase>
                <FlightButton>AUTO<br />ABORT</FlightButton>
                <TickBar from={777.2} count={17} x={761} w={400} />
                <FlightButton>MECO<br />TARGET</FlightButton>
              </FlightBase>
            </Flight>
            <Heading title="FUEL TANKS" />
            <FuelTanks />
            <PanelFoot bright />
          </Panel>

          <Panel>
            <Heading title="ENGINE CHECKS" />
            <Engine />
            <Heading title="PRESSURE PANEL" />
            <Pressure />
            <Heading title="WARNINGS" />
            <WarnArea>
              <WarnTable>
                <tbody>
                  {WARNINGS.map((row, i) => (
                    <tr key={i}>{row.map((t) => <td key={t}>{t[0] === "-" ? <Dashes>{t}</Dashes> : t}</td>)}</tr>
                  ))}
                </tbody>
              </WarnTable>
            </WarnArea>
            <PanelFoot />
          </Panel>
        </Console>

        <Lower>
          <TermWrap>
            <Terminal>
              <Menu>
                {["Left", "File", "Command", "Options", "Right"].map((t) => <button key={t}>{t}</button>)}
              </Menu>
              <Panes>
                <FilePane path="/mnt/e/src/Terminal/src" rows={SRC} summary="UP--DIR" />
                <FilePane path="/mnt/e/src/Terminal/doc/specs" rows={SPECS} summary="*#754 - Cascading Default Settings.md" selected={8} open />
              </Panes>
            </Terminal>
          </TermWrap>
          <Tail />
          <Gauges>
            <Notch />
            <Quad>
              <QuadCell $pad="15px 0 0 22px"><QuadName>P.Col.(R)</QuadName><QuadValue>-0.8</QuadValue></QuadCell>
              <QuadCell $pad="15px 26px 0 0"><QuadName>%PAP</QuadName><QuadValue>2</QuadValue></QuadCell>
              <QuadCell $pad="21px 0 0 4px"><QuadName>T. Echap</QuadName><QuadValue $low>468</QuadValue></QuadCell>
              <QuadCell $pad="21px 8px 0 0"><QuadName>AFR</QuadName><QuadValue $low>15.6</QuadValue></QuadCell>
            </Quad>
            <Device>
              <Screen>
                <RpmScale />
                <Readings>
                  <LeftSide>
                    <Caption>Batterie</Caption>
                    <Value $size={36} $unit={25} $gap={4}>0.0<small>Volts</small></Value>
                    <Caption>Vitesse</Caption>
                    <Value $size={36} $unit={25} $gap={0}>0<small>km/h</small></Value>
                  </LeftSide>
                  <Gear>E</Gear>
                  <RightSide>
                    <Caption>Temp.Eau</Caption>
                    <Value $size={58} $unit={34} $gap={13}>-40<small>°C</small></Value>
                    <Caption>Press.Huile</Caption>
                    <Value $size={36} $unit={24} $gap={0}>0.0<small> Bars</small></Value>
                  </RightSide>
                </Readings>
              </Screen>
            </Device>
          </Gauges>
        </Lower>
      </Main>
      <Swatches>
        <Swatch $w={40} $h={27} $c="#000" />
        <Swatch $w={40} $h={30} $c="#404040" />
        <Swatch $w={40} $h={28} $c="#808080" />
        <Swatch $w={45} $h={32} $c="#b0b0b0" $gap={68} />
        <Swatch $w={28} $h={28} $c="#2a2a2a" $gap={126} />
      </Swatches>
    </Page>
  );
}
